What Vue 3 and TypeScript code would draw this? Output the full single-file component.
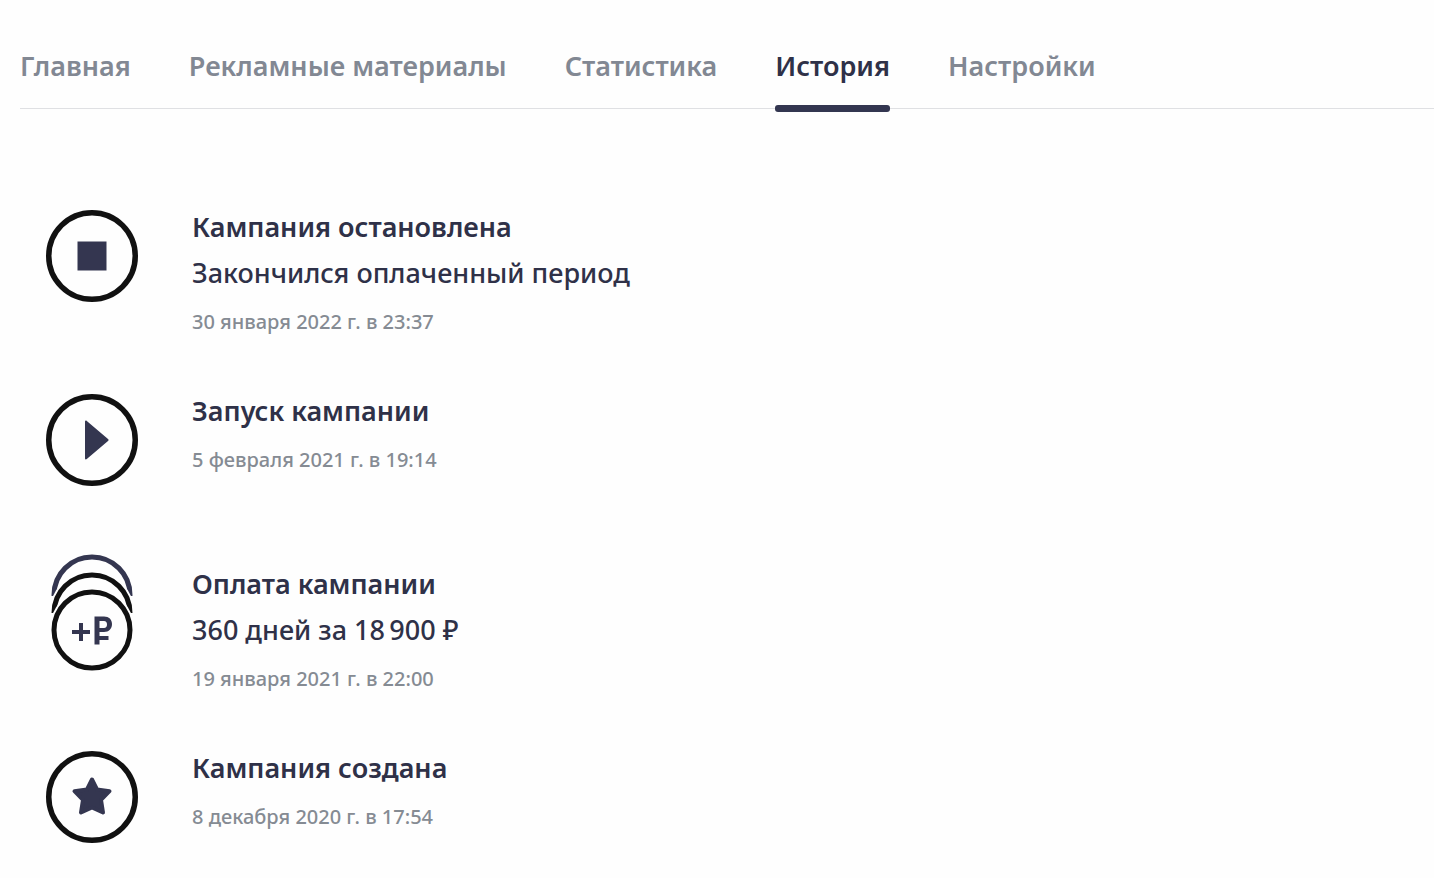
<script setup lang="ts">
interface Tab {
  label: string
  href: string
  active?: boolean
}

interface HistoryEvent {
  icon: 'stop' | 'play' | 'payment' | 'star'
  title: string
  details?: string
  date: string
  datetime: string
}

const tabs: Tab[] = [
  { label: 'Главная', href: '#main' },
  { label: 'Рекламные материалы', href: '#materials' },
  { label: 'Статистика', href: '#statistics' },
  { label: 'История', href: '#history', active: true },
  { label: 'Настройки', href: '#settings' },
]

const events: HistoryEvent[] = [
  {
    icon: 'stop',
    title: 'Кампания остановлена',
    details: 'Закончился оплаченный период',
    date: '30 января 2022 г. в 23:37',
    datetime: '2022-01-30T23:37',
  },
  {
    icon: 'play',
    title: 'Запуск кампании',
    date: '5 февраля 2021 г. в 19:14',
    datetime: '2021-02-05T19:14',
  },
  {
    icon: 'payment',
    title: 'Оплата кампании',
    details: '360 дней за 18\u202f900 ₽',
    date: '19 января 2021 г. в 22:00',
    datetime: '2021-01-19T22:00',
  },
  {
    icon: 'star',
    title: 'Кампания создана',
    date: '8 декабря 2020 г. в 17:54',
    datetime: '2020-12-08T17:54',
  },
]
</script>

<template>
  <div class="page">
    <nav class="tabs">
      <a
        v-for="tab in tabs"
        :key="tab.href"
        :href="tab.href"
        class="tab"
        :class="{ 'tab--active': tab.active }"
        :aria-current="tab.active ? 'page' : undefined"
      >{{ tab.label }}</a>
    </nav>

    <main>
      <ul class="history">
        <li v-for="event in events" :key="event.datetime" class="event">
          <svg
            v-if="event.icon === 'payment'"
            class="icon icon--stack"
            viewBox="0 0 92 117"
            aria-hidden="true"
          >
            <g stroke-width="5">
              <circle class="ring ring--accent" cx="46" cy="41" r="38" />
              <circle class="mask" cx="46" cy="60" r="43" />
              <rect class="mask" x="0" y="42" width="92" height="60" />
              <circle class="ring" cx="46" cy="59" r="38" />
              <circle class="mask" cx="46" cy="77" r="43" />
              <rect class="mask" x="0" y="59" width="92" height="57" />
              <circle class="ring" cx="46" cy="76" r="38" />
            </g>
            <path class="glyph" d="M33 69h4v7h7v4h-7v7h-4v-7h-7v-4h7z" />
            <path
              class="glyph"
              fill-rule="evenodd"
              d="M48.500 62.500h9.500c5 0 8 3 8 7.500s-3 8-8 8h-4.500v4h9v4h-9v4.500h-5zM53.500 67v7h4.500c2 0 3-1.200 3-3.500s-1-3.500-3-3.500z"
            />
          </svg>
          <svg v-else class="icon" viewBox="0 0 92 92" aria-hidden="true">
            <circle class="ring" cx="46" cy="46" r="43.250" stroke-width="5.500" />
            <rect v-if="event.icon === 'stop'" class="glyph" x="31.500" y="31.500" width="29" height="29" />
            <path
              v-else-if="event.icon === 'play'"
              class="glyph"
              d="M39 27.500c0-1 1-1.300 1.800-.6L62 45c.8.700.8 1.300 0 2L40.800 65.100c-.8.700-1.800.4-1.800-.6z"
            />
            <path
              v-else
              class="glyph glyph--rounded"
              d="M46 28.500L51 38.500L63.500 40.200L55 48.800L57 61.500L46 56.500L35 61.500L37 48.800L28.500 40.200L41 38.500Z"
            />
          </svg>
          <div class="event__body">
            <h2 class="event__title">{{ event.title }}</h2>
            <p v-if="event.details" class="event__details">{{ event.details }}</p>
            <time class="event__date" :datetime="event.datetime">{{ event.date }}</time>
          </div>
        </li>
      </ul>
    </main>
  </div>
</template>

<style>
body {
  margin: 0;
  background: #fefefe;
}
</style>

<style scoped>
.page {
  padding: 46px 0 20px 20px;
  color: #2f3148;
  font-family: 'Noto Sans', 'Open Sans', sans-serif;
  font-size: 27px;
  line-height: 40px;
}

.tabs {
  display: flex;
  gap: 58px;
  border-bottom: 1px solid #dfe0e3;
}

.tab {
  position: relative;
  padding-bottom: 22px;
  color: #828893;
  font-weight: 600;
  text-decoration: none;
  white-space: nowrap;
}

.tab--active {
  color: #2f3148;
}

.tab--active::after {
  content: '';
  position: absolute;
  right: 0;
  bottom: -4px;
  left: 0;
  height: 7px;
  border-radius: 3px;
  background: #333650;
}

.history {
  display: flex;
  flex-direction: column;
  gap: 58px;
  margin: 0;
  padding: 101px 26px 0;
  list-style: none;
}

.event {
  display: flex;
  align-items: flex-start;
  gap: 54px;
  min-height: 115px;
}

.event:last-child {
  min-height: 0;
}

.icon {
  flex: none;
  width: 92px;
}

.icon--stack {
  margin-top: -13px;
}

.ring {
  fill: none;
  stroke: #111;
}

.ring--accent {
  stroke: #343650;
}

.mask {
  fill: #fefefe;
}

.glyph {
  fill: #343650;
}

.glyph--rounded {
  stroke: #343650;
  stroke-width: 4;
  stroke-linejoin: round;
}

.event__title,
.event__details {
  margin: 0 0 12px;
  font-size: 27px;
  line-height: 34px;
}

.event__title {
  font-weight: 600;
}

.event__details {
  font-weight: 500;
}

.event__date {
  display: block;
  margin-top: 18px;
  color: #858b93;
  font-size: 20px;
  font-weight: 500;
  line-height: 28px;
}
</style>
